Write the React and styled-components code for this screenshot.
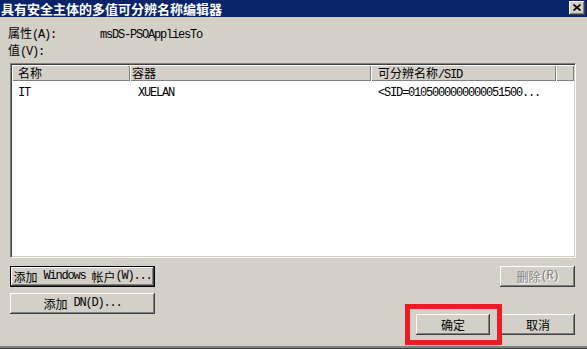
import React from 'react';
import styled, { createGlobalStyle } from 'styled-components';

const Global = createGlobalStyle`
  html, body { margin: 0; padding: 0; background: #d4d0c8; }
  body {
    width: 587px; height: 349px; overflow: hidden;
    font-family: "Noto Sans CJK SC", "Liberation Mono", monospace;
    font-size: 12px; color: #000;
  }
  * { box-sizing: border-box; }
`;

const Han = styled.span`
  font-family: "Noto Sans CJK SC", sans-serif;
  font-size: 12px;
`;

const Latin = styled.span`
  font-family: "Liberation Mono", "DejaVu Sans Mono", monospace;
  font-size: 12px;
  letter-spacing: -1.2px;
  white-space: pre;
`;

const CJK = /([\u3000-\u9fff\uff00-\uffef]+)/;
function Txt({ children }) {
  const parts = String(children).split(CJK);
  return parts.map((p, i) =>
    p === '' ? null : i % 2 === 1 ? <Han key={i}>{p}</Han> : <Latin key={i}>{p}</Latin>
  );
}

const Dialog = styled.div`
  width: 587px;
  height: 348px;
  display: flex;
  flex-direction: column;
  background: #d4d0c8;
  border-bottom: 2px solid #808080;
  box-shadow: 0 1px 0 #404040;
`;

const TitleBar = styled.div`
  height: 17px;
  flex: none;
  background: #0a246a;
  display: flex;
  align-items: center;
  justify-content: space-between;
  padding: 0 2px 0 1px;
`;

const TitleText = styled.div`
  color: #fff;
  font-family: "Noto Sans CJK SC", sans-serif;
  font-weight: 700;
  font-size: 13px;
  line-height: 17px;
`;

const CloseBtn = styled.div`
  width: 16px;
  height: 14px;
  margin-top: 1px;
  align-self: flex-start;
  background: #d4d0c8;
  box-shadow: inset -1px -1px #404040, inset 1px 1px #fff, inset -2px -2px #808080;
  display: flex;
  align-items: center;
  justify-content: center;
  padding-bottom: 1px;
`;

const Body = styled.div`
  flex: 1;
  display: flex;
  flex-direction: column;
  padding: 0 11px 0 8px;
`;

const FieldRow = styled.div`
  display: flex;
  height: 14px;
  line-height: 14px;
  margin-top: ${p => p.$mt}px;
`;

const FieldLabel = styled.div`
  width: 92px;
  flex: none;
`;

const FieldValue = styled.div``;

const List = styled.div`
  margin: 6px 0 0 2px;
  width: 566px;
  height: 195px;
  flex: none;
  background: #fff;
  border: 1px solid;
  border-color: #808080 #fff #fff #808080;
  box-shadow: inset 1px 1px #404040, inset -1px -1px #d4d0c8;
  padding: 1px;
  display: flex;
  flex-direction: column;
`;

const HeaderRow = styled.div`
  display: flex;
  height: 16px;
  background: #d4d0c8;
`;

const HeaderCell = styled.div`
  width: ${p => (p.$w ? `${p.$w}px` : 'auto')};
  flex: ${p => (p.$w ? 'none' : '1')};
  height: 16px;
  line-height: 16px;
  padding-left: ${p => p.$pad}px;
  box-shadow: inset 1px 1px #fff, inset -1px -1px #808080;
  white-space: nowrap;
`;

const DataRow = styled.div`
  display: flex;
  height: 17px;
  line-height: 17px;
  margin-top: 1px;
`;

const DataCell = styled.div`
  width: ${p => p.$w}px;
  flex: none;
  padding-left: ${p => p.$pad}px;
  white-space: nowrap;
`;

const BottomArea = styled.div`
  margin-top: 8px;
  margin-left: 2px;
  height: 69px;
  display: flex;
  justify-content: space-between;
`;

const LeftButtons = styled.div`
  display: flex;
  flex-direction: column;
  gap: 6px;
`;

const RightButtons = styled.div`
  display: flex;
  flex-direction: column;
  align-items: flex-end;
  justify-content: space-between;
  margin-right: 1px;
`;

const DialogButtons = styled.div`
  display: flex;
  gap: 11px;
`;

const Btn = styled.button`
  width: ${p => p.$w}px;
  height: 21px;
  margin: 0;
  padding: 0;
  background: #d4d0c8;
  color: ${p => (p.disabled ? '#808080' : '#000')};
  text-shadow: ${p => (p.disabled ? '1px 1px #fff' : 'none')};
  font: inherit;
  line-height: 19px;
  border: ${p => (p.$default ? '1px solid #000' : 'none')};
  box-shadow: inset -1px -1px #404040, inset 1px 1px #fff, inset -2px -2px #808080;
  display: flex;
  align-items: center;
  justify-content: center;
  white-space: nowrap;
  cursor: default;
`;

const Highlight = styled.div`
  position: relative;
`;

const RedFrame = styled.div`
  position: absolute;
  left: -11px;
  top: -10px;
  right: -12px;
  bottom: -10px;
  border: 5px solid #ed1c24;
  pointer-events: none;
`;

const columns = [
  { w: 118, hp: 6, dp: 6, title: '名称', value: 'IT' },
  { w: 241, hp: 2, dp: 8, title: '容器', value: 'XUELAN' },
  { w: 185, hp: 7, dp: 7, title: '可分辨名称/SID', value: '<SID=0105000000000051500...' },
];

export default function App() {
  return (
    <>
      <Global />
      <Dialog>
        <TitleBar>
          <TitleText>具有安全主体的多值可分辨名称编辑器</TitleText>
          <CloseBtn>
            <svg width="8" height="7" viewBox="0 0 8 7">
              <path d="M0.5 0.5 L7.5 6.5 M7.5 0.5 L0.5 6.5" stroke="#000" strokeWidth="1.6" />
            </svg>
          </CloseBtn>
        </TitleBar>
        <Body>
          <FieldRow $mt={9}>
            <FieldLabel><Txt>属性(A):</Txt></FieldLabel>
            <FieldValue><Txt>msDS-PSOAppliesTo</Txt></FieldValue>
          </FieldRow>
          <FieldRow $mt={3}>
            <FieldLabel><Txt>值(V):</Txt></FieldLabel>
          </FieldRow>
          <List>
            <HeaderRow>
              {columns.map(c => (
                <HeaderCell key={c.title} $w={c.w} $pad={c.hp}><Txt>{c.title}</Txt></HeaderCell>
              ))}
              <HeaderCell $pad={0} />
            </HeaderRow>
            <DataRow>
              {columns.map(c => (
                <DataCell key={c.title} $w={c.w} $pad={c.dp}><Txt>{c.value}</Txt></DataCell>
              ))}
            </DataRow>
          </List>
          <BottomArea>
            <LeftButtons>
              <Btn $w={145} $default><Txt>添加 Windows 帐户(W)...</Txt></Btn>
              <Btn $w={145}><Txt>添加 DN(D)...</Txt></Btn>
            </LeftButtons>
            <RightButtons>
              <Btn $w={75} disabled><Txt>删除(R)</Txt></Btn>
              <DialogButtons>
                <Highlight>
                  <Btn $w={74}><Txt>确定</Txt></Btn>
                  <RedFrame />
                </Highlight>
                <Btn $w={74}><Txt>取消</Txt></Btn>
              </DialogButtons>
            </RightButtons>
          </BottomArea>
        </Body>
      </Dialog>
    </>
  );
}
